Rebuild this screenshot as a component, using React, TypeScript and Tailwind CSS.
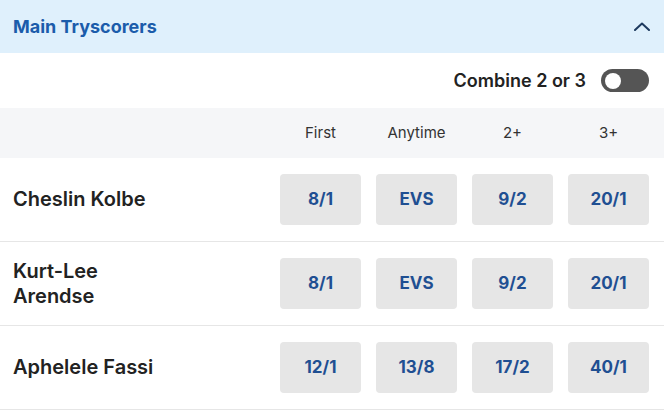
const columns = ['First', 'Anytime', '2+', '3+'];

const players = [
  { name: 'Cheslin Kolbe', odds: ['8/1', 'EVS', '9/2', '20/1'] },
  { name: 'Kurt-Lee Arendse', odds: ['8/1', 'EVS', '9/2', '20/1'] },
  { name: 'Aphelele Fassi', odds: ['12/1', '13/8', '17/2', '40/1'] },
];

export default function App() {
  return (
    <div className="w-[664px] bg-white font-['Inter',sans-serif]">
      {/* Market header */}
      <div className="flex h-[53px] items-center justify-between bg-[#dff0fc] pl-[13px] pr-[14px]">
        <h2 className="text-[18px] font-bold text-[#1b5cab]">Main Tryscorers</h2>
        <svg width="16" height="9" viewBox="0 0 16 9" fill="none" className="mt-[-1px]">
          <path d="M1 8 8 1.5 15 8" stroke="#1e3a5f" strokeWidth="2" strokeLinecap="round" strokeLinejoin="round" />
        </svg>
      </div>

      {/* Combine toggle */}
      <div className="flex h-[55px] items-center justify-end gap-[15px] pr-[15px]">
        <span className="text-[18px] font-semibold text-[#222]">Combine 2 or 3</span>
        <button className="flex h-[23px] w-[48px] items-center rounded-full bg-[#555] px-[4px]">
          <span className="h-[16px] w-[16px] rounded-full bg-white" />
        </button>
      </div>

      {/* Column labels */}
      <div className="flex h-[50px] items-center justify-end gap-[15px] bg-[#f5f6f8] pr-[15px]">
        {columns.map((col) => (
          <span key={col} className="w-[81px] text-center text-[15px] text-[#333]">
            {col}
          </span>
        ))}
      </div>

      {/* Player rows */}
      {players.map((p) => (
        <div key={p.name} className="flex items-center border-b border-[#e6e6e6] py-[16px] pl-[13px] pr-[15px]">
          <span className="w-[100px] flex-1 text-[20px] font-semibold leading-[25px] text-[#222]">
            {p.name === 'Kurt-Lee Arendse' ? (
              <>
                Kurt-Lee
                <br />
                Arendse
              </>
            ) : (
              p.name
            )}
          </span>
          <div className="flex gap-[15px]">
            {p.odds.map((o, i) => (
              <button
                key={i}
                className="flex h-[51px] w-[81px] items-center justify-center rounded-[4px] bg-[#e6e6e6] text-[17px] font-bold text-[#1f4f92]"
              >
                {o}
              </button>
            ))}
          </div>
        </div>
      ))}
    </div>
  );
}
